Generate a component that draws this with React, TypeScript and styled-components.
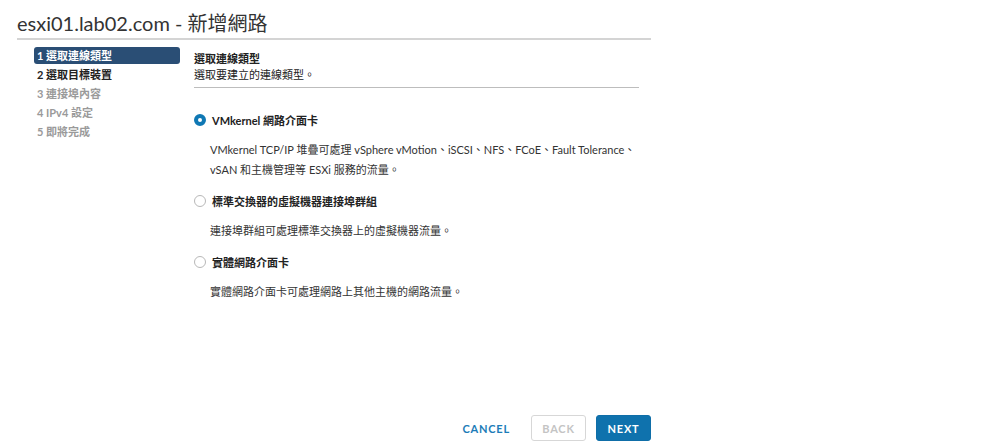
import React from 'react';
import styled, { createGlobalStyle } from 'styled-components';

const GlobalStyle = createGlobalStyle`
  html, body {
    margin: 0;
    padding: 0;
    background: #fff;
  }
  body {
    font-family: 'Lato', 'Noto Sans CJK TC', sans-serif;
    color: #313131;
  }
`;

const Page = styled.div`
  width: 651px;
  height: 448px;
  padding-left: 17px;
  display: flex;
  flex-direction: column;
  box-sizing: border-box;
`;

const Title = styled.h1`
  margin: 0;
  padding-top: 11px;
  height: 27px;
  font-size: 20px;
  line-height: 24px;
  font-weight: 400;
  color: #333;
  border-bottom: 2px solid #d4d4d4;
  box-sizing: content-box;
`;

const Body = styled.div`
  display: flex;
  gap: 14px;
  padding-top: 7px;
  flex: 1;
`;

const Nav = styled.ol`
  list-style: none;
  margin: 0 0 0 17px;
  padding: 0;
  width: 146px;
  display: flex;
  flex-direction: column;
  gap: 2px;
`;

const NavItem = styled.li<{ state: 'active' | 'next' | 'disabled' }>`
  height: 17px;
  line-height: 17px;
  padding-left: 3px;
  border-radius: 3px;
  font-size: 11px;
  font-weight: 700;
  background: ${({ state }) => (state === 'active' ? '#2a4e75' : 'transparent')};
  color: ${({ state }) =>
    state === 'active' ? '#fff' : state === 'next' ? '#222' : '#9a9a9a'};
`;

const Content = styled.div`
  width: 445px;
  display: flex;
  flex-direction: column;
`;

const StepHead = styled.div`
  padding-top: 4px;
  padding-bottom: 4px;
  border-bottom: 1px solid #bdbdbd;
  font-size: 11px;
  line-height: 16px;
  color: #222;
`;

const StepTitle = styled.div`
  font-weight: 700;
`;

const Options = styled.div`
  display: flex;
  flex-direction: column;
  padding-top: 24px;
`;

const Option = styled.label`
  display: flex;
  align-items: center;
  gap: 6px;
  height: 16px;
  font-size: 11px;
  font-weight: 700;
  color: #222;
`;

const Radio = styled.span<{ checked?: boolean }>`
  width: 12px;
  height: 12px;
  border-radius: 50%;
  box-sizing: border-box;
  border: ${({ checked }) => (checked ? '4px solid #0f78b4' : '1px solid #b8b8b8')};
  background: #fff;
  flex: none;
`;

const Desc = styled.p`
  margin: 0;
  padding: 12px 0 13px 16px;
  font-size: 11px;
  line-height: 20px;
  color: #333;
  white-space: nowrap;
`;

const Footer = styled.div`
  display: flex;
  justify-content: flex-end;
  align-items: center;
  gap: 10px;
  padding-bottom: 7px;
`;

const Button = styled.button<{ variant: 'link' | 'outline' | 'primary' }>`
  height: 26px;
  width: ${({ variant }) => (variant === 'link' ? 'auto' : '55px')};
  padding: 0 10px;
  box-sizing: border-box;
  border-radius: 3px;
  font-family: 'Lato', sans-serif;
  font-size: 11px;
  font-weight: 700;
  letter-spacing: 0.8px;
  cursor: pointer;
  border: 1px solid
    ${({ variant }) =>
      variant === 'outline' ? '#d7d7d7' : variant === 'primary' ? '#0f6ea8' : 'transparent'};
  background: ${({ variant }) => (variant === 'primary' ? '#0f72ad' : '#fff')};
  color: ${({ variant }) =>
    variant === 'primary' ? '#fff' : variant === 'outline' ? '#c4c4c4' : '#1c7cb8'};
`;

const steps: { label: string; state: 'active' | 'next' | 'disabled' }[] = [
  { label: '1 選取連線類型', state: 'active' },
  { label: '2 選取目標裝置', state: 'next' },
  { label: '3 連接埠內容', state: 'disabled' },
  { label: '4 IPv4 設定', state: 'disabled' },
  { label: '5 即將完成', state: 'disabled' },
];

const options = [
  {
    label: 'VMkernel 網路介面卡',
    checked: true,
    desc: (
      <>
        VMkernel TCP/IP 堆疊可處理 vSphere vMotion、iSCSI、NFS、FCoE、Fault Tolerance、
        <br />
        vSAN 和主機管理等 ESXi 服務的流量。
      </>
    ),
  },
  {
    label: '標準交換器的虛擬機器連接埠群組',
    checked: false,
    desc: <>連接埠群組可處理標準交換器上的虛擬機器流量。</>,
  },
  {
    label: '實體網路介面卡',
    checked: false,
    desc: <>實體網路介面卡可處理網路上其他主機的網路流量。</>,
  },
];

export default function App() {
  return (
    <>
      <GlobalStyle />
      <Page>
        <Title>esxi01.lab02.com - 新增網路</Title>
        <Body>
          <Nav>
            {steps.map((s) => (
              <NavItem key={s.label} state={s.state}>
                {s.label}
              </NavItem>
            ))}
          </Nav>
          <Content>
            <StepHead>
              <StepTitle>選取連線類型</StepTitle>
              <div>選取要建立的連線類型。</div>
            </StepHead>
            <Options>
              {options.map((o) => (
                <div key={o.label}>
                  <Option>
                    <Radio checked={o.checked} />
                    {o.label}
                  </Option>
                  <Desc>{o.desc}</Desc>
                </div>
              ))}
            </Options>
          </Content>
        </Body>
        <Footer>
          <Button variant="link">CANCEL</Button>
          <Button variant="outline">BACK</Button>
          <Button variant="primary">NEXT</Button>
        </Footer>
      </Page>
    </>
  );
}
